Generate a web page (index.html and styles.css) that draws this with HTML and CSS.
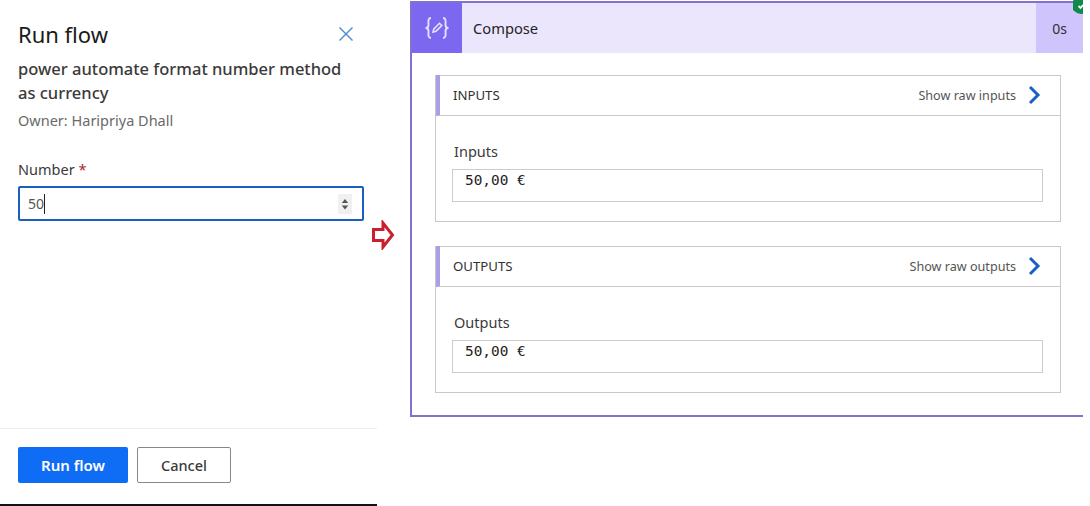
FILE: index.html
```html
<!DOCTYPE html>
<html lang="en">
<head>
<meta charset="utf-8">
<title>Run flow</title>
<link rel="stylesheet" href="styles.css">
</head>
<body>
<div class="page">
  <aside class="panel">
    <div class="panel-body">
      <div class="panel-head">
        <h1 class="panel-title">Run flow</h1>
        <svg class="close-icon" width="16" height="16" viewBox="0 0 16 16"><path d="M1.5 1.5 L14.5 14.5 M14.5 1.5 L1.5 14.5" stroke="#4a8ac9" stroke-width="1.4" fill="none"/></svg>
      </div>
      <h2 class="flow-name">power automate format number method as currency</h2>
      <p class="owner">Owner: Haripriya Dhall</p>
      <label class="field-label">Number <span class="required">*</span></label>
      <div class="number-input">
        <span class="number-value">50</span><span class="caret"></span>
        <span class="spinner">
          <svg width="14" height="20" viewBox="0 0 14 20"><rect width="14" height="20" fill="#f0f0f0"/><path d="M7 5 L10.2 9 H3.8 Z M7 15.5 L3.8 11.5 H10.2 Z" fill="#555"/></svg>
        </span>
      </div>
    </div>
    <div class="panel-foot">
      <button class="btn btn-primary">Run flow</button>
      <button class="btn btn-default">Cancel</button>
    </div>
  </aside>
  <div class="arrow-col">
    <svg width="24" height="30" viewBox="0 0 24 30"><path d="M2.5 9.5 H12 V3 L21.5 15 L12 27 V20.5 H2.5 Z" fill="#fff" stroke="#c8202f" stroke-width="3"/></svg>
  </div>
  <main class="card">
    <header class="card-head">
      <div class="card-icon">
        <svg width="28" height="26" viewBox="0 0 28 26" fill="none" stroke="#e6e0ff" stroke-width="1.9"><path d="M8 3 C4.5 3 5.5 7 5.5 10 C5.5 12 4.5 13 2.5 13 C4.5 13 5.5 14 5.5 16 C5.5 19 4.5 23 8 23"/><path d="M20 3 C23.5 3 22.5 7 22.5 10 C22.5 12 23.5 13 25.5 13 C23.5 13 22.5 14 22.5 16 C22.5 19 23.5 23 20 23"/><path d="M10 17 L10.8 14 L16.5 8.3 L18.8 10.6 L13 16.2 Z" stroke-width="1.6"/></svg>
      </div>
      <div class="card-title">Compose</div>
      <div class="card-time">0s</div>
      <svg class="status-dot" width="10" height="15" viewBox="0 0 10 15"><circle cx="8" cy="5" r="9" fill="#0f8a4a"/><path d="M5.5 6 L7.5 8 L10 5" fill="none" stroke="#fff" stroke-width="1.8"/></svg>
    </header>
    <div class="card-body">
      <section class="block">
        <div class="block-head">
          <span class="block-title">INPUTS</span>
          <span class="raw-link">Show raw inputs</span>
          <svg class="chevron" width="14" height="20" viewBox="0 0 14 20"><path d="M3 2 L11 10 L3 18" fill="none" stroke="#1c5fc4" stroke-width="3"/></svg>
        </div>
        <div class="block-body">
          <div class="value-label">Inputs</div>
          <div class="value-box">50,00 €</div>
        </div>
      </section>
      <section class="block">
        <div class="block-head">
          <span class="block-title">OUTPUTS</span>
          <span class="raw-link">Show raw outputs</span>
          <svg class="chevron" width="14" height="20" viewBox="0 0 14 20"><path d="M3 2 L11 10 L3 18" fill="none" stroke="#1c5fc4" stroke-width="3"/></svg>
        </div>
        <div class="block-body">
          <div class="value-label">Outputs</div>
          <div class="value-box">50,00 €</div>
        </div>
      </section>
    </div>
  </main>
</div>
</body>
</html>
```
FILE: styles.css
```css
* { box-sizing: border-box; }
html, body { margin: 0; padding: 0; background: #fff; }
body { font-family: "Noto Sans", "Open Sans", sans-serif; color: #323130; }
.page { display: flex; align-items: flex-start; width: 1090px; height: 506px; overflow: hidden; }

.panel { width: 377px; height: 506px; flex: none; display: flex; flex-direction: column; border-bottom: 2px solid #111; }
.panel-body { flex: 1; padding: 19px 13px 0 18px; }
.panel-head { display: flex; align-items: center; justify-content: space-between; padding-right: 10px; height: 30px; }
.panel-title { margin: 0; font-size: 22px; font-weight: 400; color: #1b1a19; line-height: 30px; }
.flow-name { margin: 8px 0 0; font-size: 16.5px; font-weight: 500; line-height: 24px; color: #3b3a39; width: 335px; }
.owner { margin: 5px 0 0; font-size: 14.5px; line-height: 20px; color: #6b6a69; }
.field-label { display: block; margin-top: 29px; font-size: 14.5px; font-weight: 400; line-height: 20px; color: #3b3a39; }
.required { color: #a4262c; }
.number-input { display: flex; align-items: center; height: 35px; margin-top: 7px; padding: 0 10px 0 8px; border: 2px solid #1a5fbf; border-radius: 2px; font-size: 14px; color: #555; }
.number-value { line-height: 20px; }
.caret { width: 1px; height: 20px; background: #222; }
.spinner { margin-left: auto; display: flex; }

.panel-foot { flex: none; height: 76px; padding: 18px 0 0 18px; display: flex; gap: 9px; align-items: flex-start; border-top: 1px solid #eeeded; }
.btn { height: 36px; font-family: inherit; font-size: 14.5px; border-radius: 2px; }
.btn-primary { width: 110px; border: 0; background: #0f6cf5; color: #fff; font-size: 15px; font-weight: 600; }
.btn-default { width: 94px; border: 1px solid #8a8886; background: #fff; color: #3b3a39; font-weight: 500; }

.arrow-col { width: 27px; flex: none; margin-left: -6px; padding-top: 220px; margin-right: 12px; display: flex; }

.card { width: 673px; height: 416px; flex: none; margin-top: 1px; border-left: 2px solid #8172d2; border-top: 2px solid #8172d2; border-bottom: 2px solid #8172d2; }
.card-head { position: relative; display: flex; height: 50px; background: #ece6fd; }
.card-icon { width: 50px; background: #7b67f0; display: flex; align-items: center; justify-content: center; }
.card-title { flex: 1; padding-left: 11px; font-size: 14.7px; line-height: 50px; color: #252423; }
.card-time { width: 47px; background: #cfc4fb; font-size: 14px; text-align: center; line-height: 52px; color: #323130; }
.status-dot { position: absolute; right: 0; top: -3px; }

.card-body { padding: 22px 22px 0 23px; display: flex; flex-direction: column; gap: 24px; }
.block { height: 147px; border: 1px solid #c8c8c8; }
.block-head { display: flex; align-items: center; height: 41px; border-bottom: 1px solid #c8c8c8; border-left: 4px solid #a99ee8; padding: 0 19px 0 13px; margin-top: -1px; }
.block-title { flex: 1; font-size: 13.2px; font-weight: 400; color: #323130; }
.raw-link { font-size: 12.6px; color: #555; margin-right: 11px; }
.block-body { padding: 25px 17px 0 16px; }
.value-label { padding-left: 2px; font-size: 14.5px; line-height: 20px; color: #3b3a39; }
.value-box { height: 33px; margin-top: 8px; padding: 0 12px; border: 1px solid #ccc; font-family: "DejaVu Sans Mono", monospace; font-size: 14.4px; line-height: 21px; color: #222; }
```
